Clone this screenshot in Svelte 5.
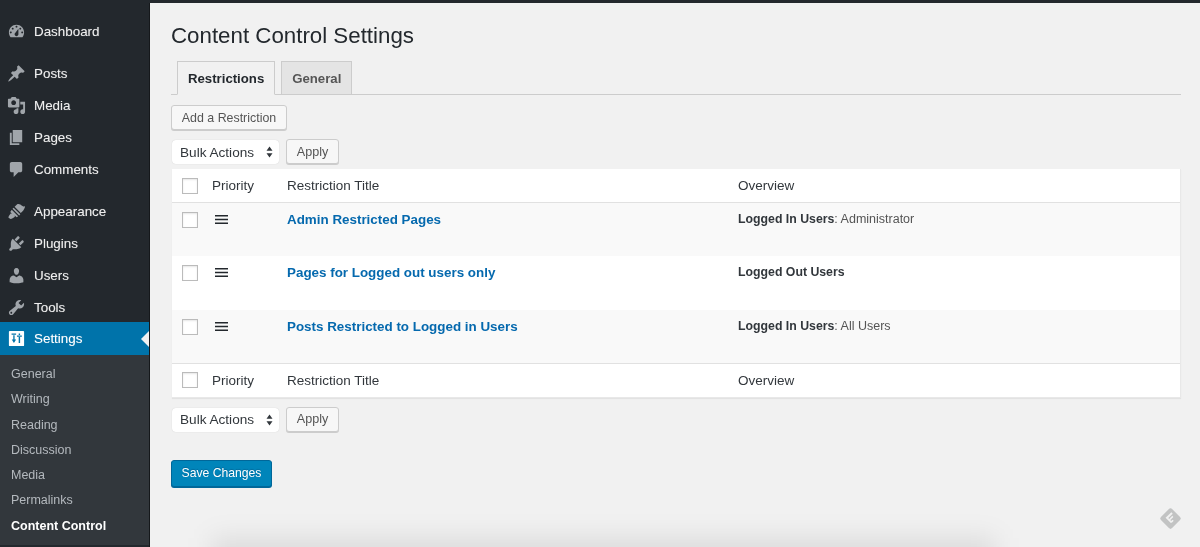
<script>
  const groups = [
    [{ name: "Dashboard", icon: "dashboard" }],
    [
      { name: "Posts", icon: "posts" },
      { name: "Media", icon: "media" },
      { name: "Pages", icon: "pages" },
      { name: "Comments", icon: "comments" }
    ],
    [
      { name: "Appearance", icon: "appearance" },
      { name: "Plugins", icon: "plugins" },
      { name: "Users", icon: "users" },
      { name: "Tools", icon: "tools" },
      { name: "Settings", icon: "settings", current: true }
    ]
  ];

  const submenu = ["General", "Writing", "Reading", "Discussion", "Media", "Permalinks", "Content Control"];

  const restrictions = [
    { title: "Admin Restricted Pages", who: "Logged In Users", detail: "Administrator" },
    { title: "Pages for Logged out users only", who: "Logged Out Users", detail: "" },
    { title: "Posts Restricted to Logged in Users", who: "Logged In Users", detail: "All Users" }
  ];

  const icons = {
    dashboard: "M3.76 16h12.48c1.1-1.37 1.76-3.11 1.76-5 0-4.42-3.58-8-8-8s-8 3.58-8 8c0 1.89.66 3.63 1.76 5zM10 4c.55 0 1 .45 1 1s-.45 1-1 1-1-.45-1-1 .45-1 1-1zM6 6c.55 0 1 .45 1 1s-.45 1-1 1-1-.45-1-1 .45-1 1-1zm8 0c.55 0 1 .45 1 1s-.45 1-1 1-1-.45-1-1 .45-1 1-1zm-5.37 5.55L12 7v6c0 1.1-.9 2-2 2s-2-.9-2-2c0-.57.24-1.08.63-1.45zM4 10c.55 0 1 .45 1 1s-.45 1-1 1-1-.45-1-1 .45-1 1-1zm12 0c.55 0 1 .45 1 1s-.45 1-1 1-1-.45-1-1 .45-1 1-1z",
    posts: "M10.44 3.02l1.82-1.82 6.36 6.35-1.83 1.82c-1.05-.68-2.48-.57-3.41.36l-.75.75c-.92.93-1.04 2.35-.35 3.41l-1.83 1.82-2.41-2.41-2.8 2.79c-.42.42-3.38 2.71-3.8 2.29s1.86-3.39 2.28-3.81l2.79-2.79L4.1 9.36l1.83-1.82c1.05.69 2.48.57 3.4-.36l.75-.75c.93-.92 1.05-2.35.36-3.41z",
    media: "M13 11V4c0-.55-.45-1-1-1h-1.67L9 1H5L3.67 3H2c-.55 0-1 .45-1 1v7c0 .55.45 1 1 1h10c.55 0 1-.45 1-1zM7 4.5c1.38 0 2.5 1.12 2.5 2.5S8.38 9.5 7 9.5 4.5 8.38 4.500 7 5.620 4.500 7 4.500zM14 6h5v10.500c0 1.380-1.120 2.500-2.500 2.500S14 17.880 14 16.500s1.120-2.500 2.500-2.500c.17 0 .34.020.5.050V9h-3V6zm-4 8.050V13h2v3.500c0 1.380-1.120 2.500-2.500 2.500S7 17.880 7 16.500 8.120 14 9.500 14c.17 0 .34.020.5.050z",
    pages: "M6 15V2h10v13H6zm-1 1h8v2H3V5h2v11z",
    comments: "M5 2h9c1.100 0 2 .9 2 2v7c0 1.100-.9 2-2 2h-2l-5 5v-5H5c-1.100 0-2-.9-2-2V4c0-1.100.9-2 2-2z",
    appearance: "M14.500 11.500L8 5l2.500-2.500c1-.8 2.500-.5 3.500.2 1.200.8 1.500 1.300 2.700 1.800 1.200.5 2.300.1 2.300.1s-.3 4.200-4.500 6.900zM7 6l7 7-1.200 1.200-7-7zM5 8.200l6.800 6.800-1.700 1-2-1.800.2 1.300-1.500 1.200c-1 .8-2 1.300-3 1.200L1.600 16.700c-.2-1 .3-2 1.100-3l1.200-1.500 1.300.2-1.800-2z",
    plugins: "M13.110 4.360L9.870 7.600 8 5.730l3.240-3.240c.35-.34 1.050-.2 1.560.31.52.51.660 1.210.310 1.560zm-8 1.770l.91-1.120 9.010 9.010-1.190.84c-.71.710-2.630 1.160-3.820 1.160H6.140L4.900 17.260c-.59.590-1.540.59-2.120 0-.59-.58-.59-1.530 0-2.120l1.240-1.240v-3.880c0-1.130.52-3.060 1.090-3.890zm7.260 3.970l3.240-3.240c.340-.35 1.040-.21 1.550.31.520.51.660 1.210.310 1.550l-3.240 3.250z",
    users: "M10 9.250c-2.270 0-2.730-3.440-2.730-3.440C7 4.020 7.820 2 9.970 2c2.160 0 2.980 2.020 2.710 3.810 0 0-.41 3.440-2.680 3.440zm0 2.570L12.720 10c2.390 0 4.520 2.330 4.520 4.530v2.490s-3.650 1.130-7.240 1.130c-3.650 0-7.240-1.130-7.240-1.130v-2.490c0-2.250 1.940-4.480 4.470-4.480z",
    tools: "M16.680 9.770c-1.340 1.340-3.300 1.670-4.950.99l-5.410 6.520c-.99.990-2.590.990-3.570 0-.99-.98-.99-2.580 0-3.570l6.520-5.420c-.68-1.650-.35-3.610.99-4.950 1.280-1.280 3.120-1.620 4.720-1.060l-2.890 2.890 2.820 2.820 2.860-2.870c.53 1.580.18 3.400-1.090 4.650zM3.810 16.210c.4.390 1.040.39 1.430 0 .4-.4.400-1.040 0-1.430-.39-.4-1.030-.4-1.430 0-.390.390-.390 1.030 0 1.430z",
    settings: "M3 2h14a1 1 0 0 1 1 1v14a1 1 0 0 1-1 1H3a1 1 0 0 1-1-1V3a1 1 0 0 1 1-1zM6.600 6.500v4.500H5l2.300 3.700L9.600 11H8V6.500zM4.800 4.800v1.300h4.800V4.800zM12.300 8.500v6.200h1.500V8.500zM10.500 6.800v1.300h5.100V6.800zM12.300 4.800v1.500h1.500V4.800z"
  };
</script>

<div class="page">
  <div class="topbar"></div>
  <div class="layout">
    <nav class="sidebar">
      {#each groups as group}
        <ul class="group">
          {#each group as item}
            <li class="item" class:current={item.current}>
              <svg class="icon" viewBox="0 0 20 20" fill-rule="evenodd"><path d={icons[item.icon]} /></svg>
              <span>{item.name}</span>
            </li>
          {/each}
        </ul>
      {/each}
      <ul class="submenu">
        {#each submenu as link}
          <li class:active={link === "Content Control"}>{link}</li>
        {/each}
      </ul>
    </nav>

    <main class="content">
      <h1>Content Control Settings</h1>
      <div class="tabs">
        <button class="tab active">Restrictions</button>
        <button class="tab">General</button>
      </div>

      <button class="btn add">Add a Restriction</button>

      {#snippet bulk()}
        <div class="bulk">
          <div class="select">
            <span>Bulk Actions</span>
            <svg width="7" height="12" viewBox="0 0 7 12"><path d="M3.500 0.500L6.500 4.700H.5zM3.500 11.500L.5 7.300h6z" /></svg>
          </div>
          <button class="btn apply">Apply</button>
        </div>
      {/snippet}

      {#snippet headrow(cls)}
        <div class="row headrow {cls}">
          <span class="check"></span>
          <span class="priority">Priority</span>
          <span class="title">Restriction Title</span>
          <span class="overview">Overview</span>
        </div>
      {/snippet}

      {@render bulk()}

      <div class="table">
        {@render headrow("top")}
        {#each restrictions as r, i}
          <div class="row body" class:odd={i % 2 === 0}>
            <span class="check"></span>
            <span class="priority">
              <svg width="13" height="9" viewBox="0 0 13 9"><path d="M0 0h13v1.400H0zM0 3.800h13v1.400H0zM0 7.600h13V9H0z" /></svg>
            </span>
            <a class="title" href="#top">{r.title}</a>
            <span class="overview"><b>{r.who}</b>{#if r.detail}: {r.detail}{/if}</span>
          </div>
        {/each}
        {@render headrow("bottom")}
      </div>

      <div class="bulk-bottom">{@render bulk()}</div>

      <button class="save">Save Changes</button>
    </main>
  </div>

  <svg class="feedly" width="23" height="23" viewBox="0 0 26 26">
    <path d="M13 1.500a2.500 2.500 0 0 1 1.800.7l9 9a2.500 2.500 0 0 1 0 3.600l-9 9a2.500 2.500 0 0 1-3.600 0l-9-9a2.500 2.500 0 0 1 0-3.600l9-9A2.500 2.500 0 0 1 13 1.500z" fill="#c2c3c3" />
    <path d="M14 6.500l1.500 1.500-5 5 1 1 3.500-3.500 1.300 1.300-3.500 3.500 1 1 1.500-1.500 1.300 1.300-1.500 1.500-1.700 1-6-6z" fill="#f1f1f1" transform="translate(0 -.5)" />
  </svg>
  <div class="smudge"></div>
</div>

<style>
  :global(body) {
    margin: 0;
    background: #f1f1f1;
  }

  .page {
    position: relative;
    width: 1200px;
    height: 547px;
    overflow: hidden;
    background: #f1f1f1;
    font-family: "Liberation Sans", Arial, sans-serif;
    font-size: 13px;
    color: #444;
  }

  .topbar {
    height: 3px;
    background: #23282d;
  }

  .layout {
    display: flex;
    height: 544px;
    filter: blur(0.3px);
  }

  /* sidebar */
  .sidebar {
    width: 149px;
    flex: none;
    background: #23282d;
    border-right: 1px solid #15181b;
    padding-top: 12px;
    box-sizing: content-box;
  }

  ul {
    list-style: none;
    margin: 0;
    padding: 0;
  }

  .group {
    margin-bottom: 10px;
  }

  .group:nth-child(3) {
    margin-bottom: 0;
  }

  .item {
    position: relative;
    display: flex;
    align-items: center;
    height: 32px;
    font-size: 13.4px;
    color: #eee;
    text-shadow: 0 0 1px rgba(255, 255, 255, 0.35);
  }

  .icon {
    width: 19px;
    height: 19px;
    margin: 0 8px 0 7px;
    fill: #a0a5aa;
    flex: none;
  }

  .item.current {
    background: #0073aa;
    color: #fff;
    height: 33px;
    margin-top: -1px;
  }

  .item.current .icon {
    fill: #fff;
  }

  .item.current::after {
    content: "";
    position: absolute;
    right: 0;
    top: 9px;
    border: 8px solid transparent;
    border-left-width: 0;
    border-right-color: #f1f1f1;
  }

  .submenu {
    background: #32373c;
    padding: 7px 0 6px;
    font-size: 12.5px;
    color: #b4b9be;
  }

  .submenu li {
    height: 25.3px;
    line-height: 25.3px;
    padding-left: 11px;
  }

  .submenu li.active {
    color: #fff;
    font-weight: 700;
  }

  /* main */
  .content {
    flex: 1;
    padding: 0 19px 0 21px;
    display: flex;
    flex-direction: column;
    align-items: flex-start;
  }

  h1 {
    margin: 19px 0 0;
    font-size: 22.3px;
    font-weight: 400;
    line-height: 27px;
    color: #23282d;
  }

  .tabs {
    align-self: stretch;
    display: flex;
    gap: 6px;
    height: 33px;
    margin-top: 12px;
    padding-left: 6px;
    border-bottom: 1px solid #ccc;
  }

  .tab {
    height: 33px;
    padding: 0 10px;
    border: 1px solid #ccc;
    border-bottom: 0;
    background: #e4e4e4;
    font: 700 13.2px "Liberation Sans", Arial, sans-serif;
    color: #555;
  }

  .tab.active {
    height: 34px;
    background: #f1f1f1;
    color: #23282d;
    border-bottom: 1px solid #f1f1f1;
  }

  .btn {
    height: 25px;
    padding: 0 9px;
    border: 1px solid #ccc;
    border-radius: 3px;
    background: #f7f7f7;
    box-shadow: 0 1px 0 #ccc;
    font: 12.6px "Liberation Sans", Arial, sans-serif;
    color: #555;
  }

  .add {
    margin-top: 10px;
    width: 116px;
    padding: 0;
    font-size: 12.4px;
  }

  .bulk {
    display: flex;
    align-items: flex-start;
    gap: 7px;
    margin: 9px 0 0 1px;
    height: 25px;
  }

  .select {
    width: 107px;
    height: 24px;
    margin-top: 1px;
    padding: 0 6px 0 8px;
    box-sizing: border-box;
    display: flex;
    align-items: center;
    justify-content: space-between;
    background: #fff;
    border-radius: 4px;
    box-shadow: 0 0 1px rgba(0, 0, 0, 0.2);
    font-size: 13.6px;
    color: #32373c;
  }

  .select svg {
    fill: #32373c;
  }

  .apply {
    width: 53px;
    padding: 0;
  }

  .table {
    align-self: stretch;
    margin: 5px 0 0 1px;
    background: #fff;
    box-shadow: 0 1px 1px rgba(0, 0, 0, 0.06);
    border: 1px solid #e8e8e8;
    border-width: 0 1px 1px 0;
  }

  .row {
    display: grid;
    grid-template-columns: 40px 75px 451px 1fr;
    box-sizing: border-box;
    font-size: 13.5px;
    color: #32373c;
  }

  .headrow {
    height: 34px;
    align-items: center;
  }

  .headrow.top {
    border-bottom: 1px solid #e1e1e1;
  }

  .headrow.bottom {
    border-top: 1px solid #e1e1e1;
  }

  .check {
    width: 14px;
    height: 14px;
    margin-left: 10px;
    border: 1px solid #bbb;
    background: #fff;
    box-shadow: inset 0 1px 2px rgba(0, 0, 0, 0.1);
  }

  .body {
    height: 53.34px;
    padding-top: 9px;
  }

  .body.odd {
    background: #f9f9f9;
  }

  .priority svg {
    display: block;
    margin: 3px 0 0 3px;
    fill: #23282d;
  }

  a.title {
    font-weight: 700;
    font-size: 13.4px;
    color: #0569ae;
    text-decoration: none;
  }

  .body .overview {
    font-size: 12.5px;
    color: #555;
    line-height: 15px;
  }

  .overview b {
    font-size: 12.3px;
    color: #32373c;
  }

  .save {
    margin-top: 28px;
    width: 101px;
    height: 27px;
    padding: 0;
    background: #0085ba;
    border: 1px solid #006799;
    border-radius: 3px;
    box-shadow: 0 1px 0 #006799;
    font: 12.2px "Liberation Sans", Arial, sans-serif;
    color: #fff;
    text-shadow: 0 -1px 1px #006799;
  }

  /* overlays on the screenshot */
  .feedly {
    position: absolute;
    left: 1159px;
    top: 507px;
  }

  .smudge {
    position: absolute;
    left: 212px;
    right: 205px;
    top: 538px;
    height: 40px;
    background: rgba(0, 0, 0, 0.085);
    filter: blur(13px);
  }
</style>
